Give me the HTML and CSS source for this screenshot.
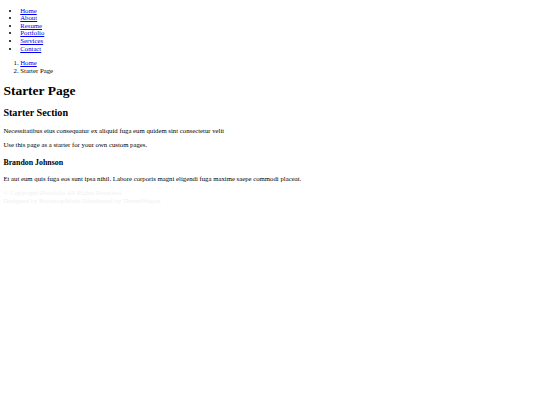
FILE: index.html
```html
<!DOCTYPE html>
<html lang="en">
<head>
<meta charset="utf-8">
<title>Starter Page</title>
<link rel="stylesheet" href="styles.css">
</head>
<body>
<header class="header">
  <nav class="navmenu">
    <ul class="nav-list">
      <li><a href="#hero">Home</a></li>
      <li><a href="#about">About</a></li>
      <li><a href="#resume">Resume</a></li>
      <li><a href="#portfolio">Portfolio</a></li>
      <li><a href="#services">Services</a></li>
      <li><a href="#contact">Contact</a></li>
    </ul>
  </nav>
</header>
<main class="main">
  <div class="page-title">
    <nav class="breadcrumbs">
      <ol class="crumb-list">
        <li><a href="#">Home</a></li>
        <li class="current">Starter Page</li>
      </ol>
    </nav>
    <h1 class="title">Starter Page</h1>
  </div>
  <section class="starter-section">
    <div class="section-title">
      <h2 class="subtitle">Starter Section</h2>
      <p class="text">Necessitatibus eius consequatur ex aliquid fuga eum quidem sint consectetur velit</p>
    </div>
    <p class="text">Use this page as a starter for your own custom pages.</p>
  </section>
</main>
<footer class="footer">
  <h3 class="sitename">Brandon Johnson</h3>
  <p class="text">Et aut eum quis fuga eos sunt ipsa nihil. Labore corporis magni eligendi fuga maxime saepe commodi placeat.</p>
  <div class="copyright"><span>© Copyright</span> <span class="sitename-inline">iPortfolio</span> <span>All Rights Reserved</span></div>
  <div class="credits">Designed by <a class="faint-link" href="#">BootstrapMade</a> Distributed by <a class="faint-link" href="#">ThemeWagon</a></div>
</footer>
</body>
</html>
```
FILE: styles.css
```css
body {
  margin: 3.375px;
  font-family: "Liberation Serif", "Times New Roman", serif;
  font-size: 6.75px;
  line-height: 1.123;
  color: #000;
  background: #fff;
}

.nav-list {
  margin: 0.5em 0 1em;
  padding-left: 16.875px;
}

.crumb-list {
  margin: 1em 0;
  padding-left: 16.875px;
}

.nav-list a,
.crumb-list a {
  color: #0000ee;
}

.title {
  font-size: 2em;
  margin: 0.67em 0;
}

.subtitle {
  font-size: 1.5em;
  margin: 0.83em 0;
}

.text {
  margin: 1em 0;
}

.sitename {
  font-size: 1.17em;
  margin: 10px 0 0.8em;
}

.copyright {
  margin-top: 6.75px;
}

.copyright,
.credits {
  color: #f0f0f0;
}

.faint-link {
  color: #f0f0f0;
  text-decoration: none;
}
```
